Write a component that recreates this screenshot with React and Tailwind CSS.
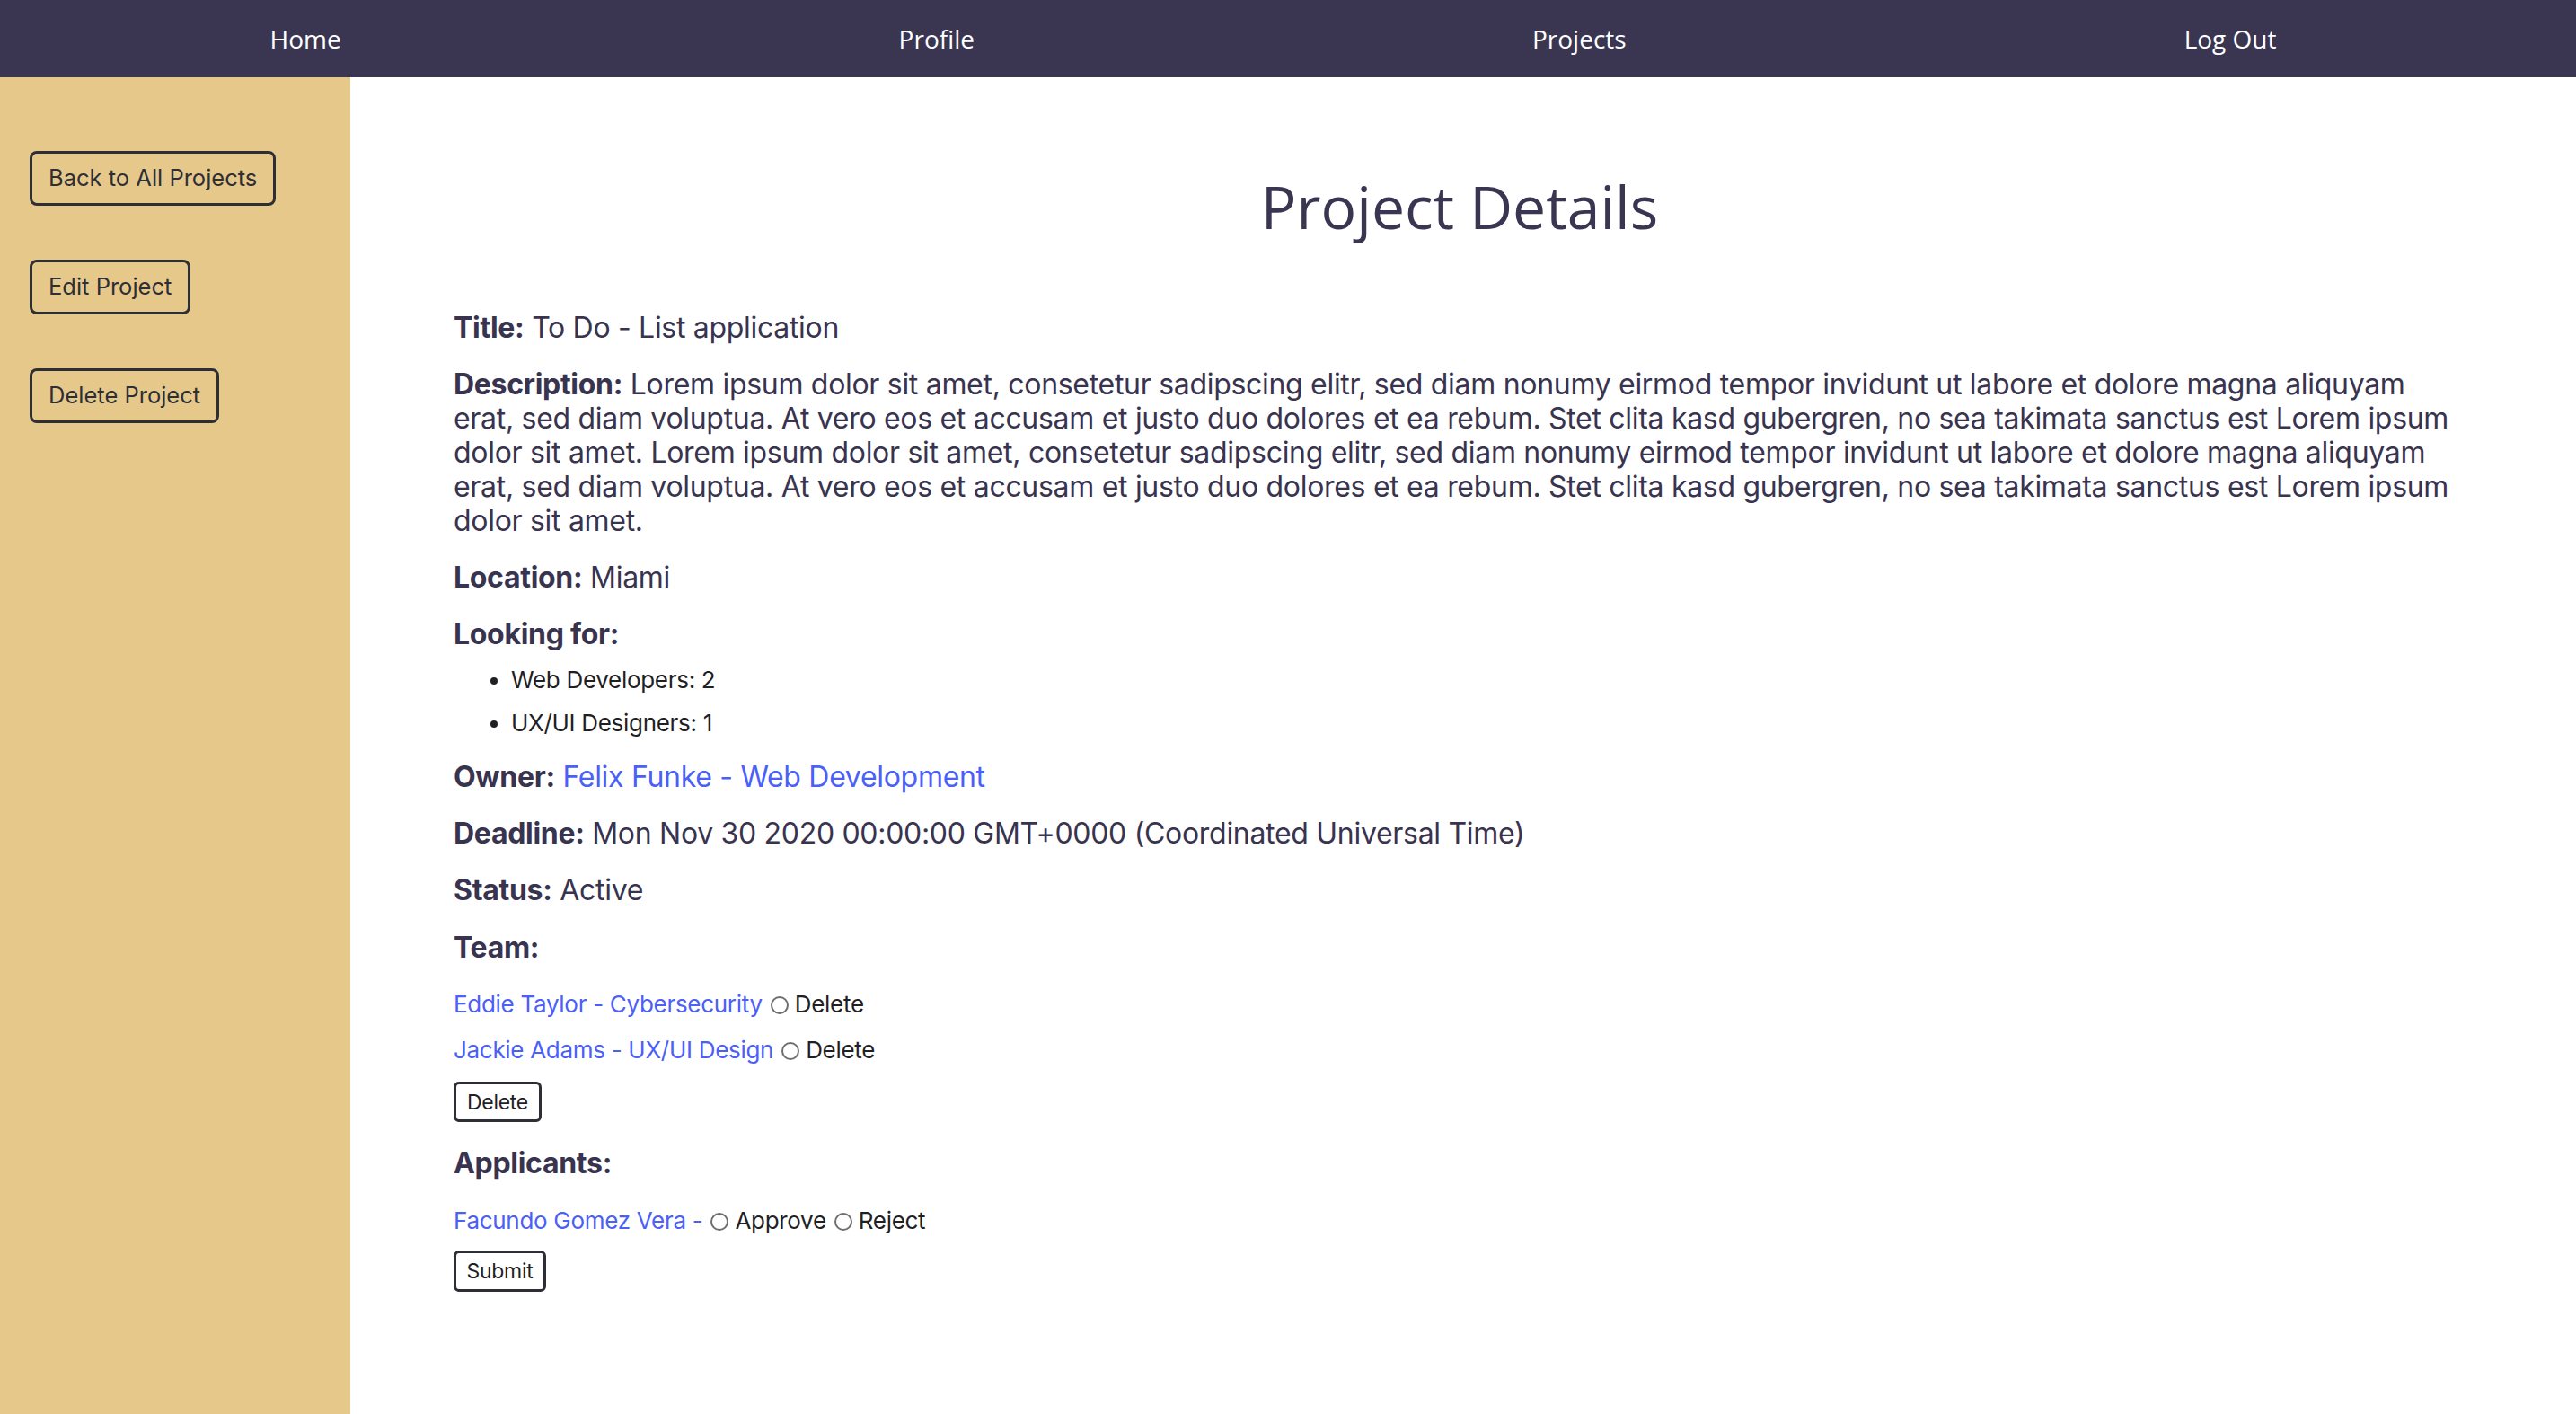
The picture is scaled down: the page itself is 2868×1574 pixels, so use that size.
const nav = ['Home', 'Profile', 'Projects', 'Log Out'];

const sideButtons = ['Back to All Projects', 'Edit Project', 'Delete Project'];

const description =
  'Lorem ipsum dolor sit amet, consetetur sadipscing elitr, sed diam nonumy eirmod tempor invidunt ut labore et dolore magna aliquyam erat, sed diam voluptua. At vero eos et accusam et justo duo dolores et ea rebum. Stet clita kasd gubergren, no sea takimata sanctus est Lorem ipsum dolor sit amet. Lorem ipsum dolor sit amet, consetetur sadipscing elitr, sed diam nonumy eirmod tempor invidunt ut labore et dolore magna aliquyam erat, sed diam voluptua. At vero eos et accusam et justo duo dolores et ea rebum. Stet clita kasd gubergren, no sea takimata sanctus est Lorem ipsum dolor sit amet.';

function Radio() {
  return (
    <span className="inline-block w-[20px] h-[20px] rounded-full border-2 border-[#6f6f6f] bg-white align-[-2px] ml-[9px] mr-[7px]" />
  );
}

function Field({ label, children }) {
  return (
    <p className="mb-[25px]">
      <span className="font-bold">{label}</span> {children}
    </p>
  );
}

export default function App() {
  return (
    <div className="min-h-screen flex flex-col font-['Inter',sans-serif]">
      <nav className="h-[86px] bg-[#3a3652] font-['Open_Sans',sans-serif] text-[28px] text-white">
        <div className="h-full flex items-center justify-around ml-[-10px] mr-[23px]">
          {nav.map((n) => (
            <a key={n} href="#">
              {n}
            </a>
          ))}
        </div>
      </nav>

      <div className="flex flex-1">
        <aside className="w-[390px] shrink-0 bg-[#e6c98a] pl-[33px] pt-[82px] flex flex-col items-start gap-[60px]">
          {sideButtons.map((b) => (
            <button
              key={b}
              className="border-[3px] border-[#2e2f36] rounded-[8px] px-[18px] h-[61px] text-[25.5px] text-[#2e2f36]"
            >
              {b}
            </button>
          ))}
        </aside>

        <main className="flex-1 pl-[115px] pr-[123px] pt-[100px] text-[#38344f] text-[32px] leading-[38px] tracking-[-0.3px]">
          <h1 className="text-center font-['Open_Sans',sans-serif] text-[66px] leading-[87px] tracking-normal mb-[73px] text-[#3a3652]">
            Project Details
          </h1>

          <Field label="Title:">To Do - List application</Field>
          <Field label="Description:">{description}</Field>
          <Field label="Location:">Miami</Field>

          <p className="font-bold mb-[15px]">Looking for:</p>
          <ul className="list-disc pl-[64px] text-[26px] leading-[34px] text-[#1f1f24] mb-[24px]">
            <li className="mb-[14px]">Web Developers: 2</li>
            <li>UX/UI Designers: 1</li>
          </ul>

          <Field label="Owner:">
            <a href="#" className="text-[#4a60f6]">
              Felix Funke - Web Development
            </a>
          </Field>
          <Field label="Deadline:">Mon Nov 30 2020 00:00:00 GMT+0000 (Coordinated Universal Time)</Field>
          <p className="mb-[26px]">
            <span className="font-bold">Status:</span> Active
          </p>

          <p className="font-bold mb-[27px]">Team:</p>
          <div className="text-[26px] leading-[34px] text-[#1f1f24] flex flex-col gap-[17px]">
            <div>
              <a href="#" className="text-[#4a60f6]">
                Eddie Taylor - Cybersecurity
              </a>
              <Radio />
              Delete
            </div>
            <div>
              <a href="#" className="text-[#4a60f6]">
                Jackie Adams - UX/UI Design
              </a>
              <Radio />
              Delete
            </div>
          </div>
          <button className="mt-[18px] w-[98px] h-[45px] border-[3px] border-[#2e2f36] rounded-[6px] text-[23px] text-[#1f1f24] bg-white">
            Delete
          </button>

          <p className="font-bold mt-[27px] mb-[28px]">Applicants:</p>
          <div className="text-[26px] leading-[34px] text-[#1f1f24]">
            <a href="#" className="text-[#4a60f6]">
              Facundo Gomez Vera -
            </a>
            <Radio />
            Approve
            <Radio />
            Reject
          </div>
          <button className="mt-[16px] w-[103px] h-[46px] border-[3px] border-[#2e2f36] rounded-[6px] text-[23px] text-[#1f1f24] bg-white">
            Submit
          </button>
        </main>
      </div>
    </div>
  );
}
